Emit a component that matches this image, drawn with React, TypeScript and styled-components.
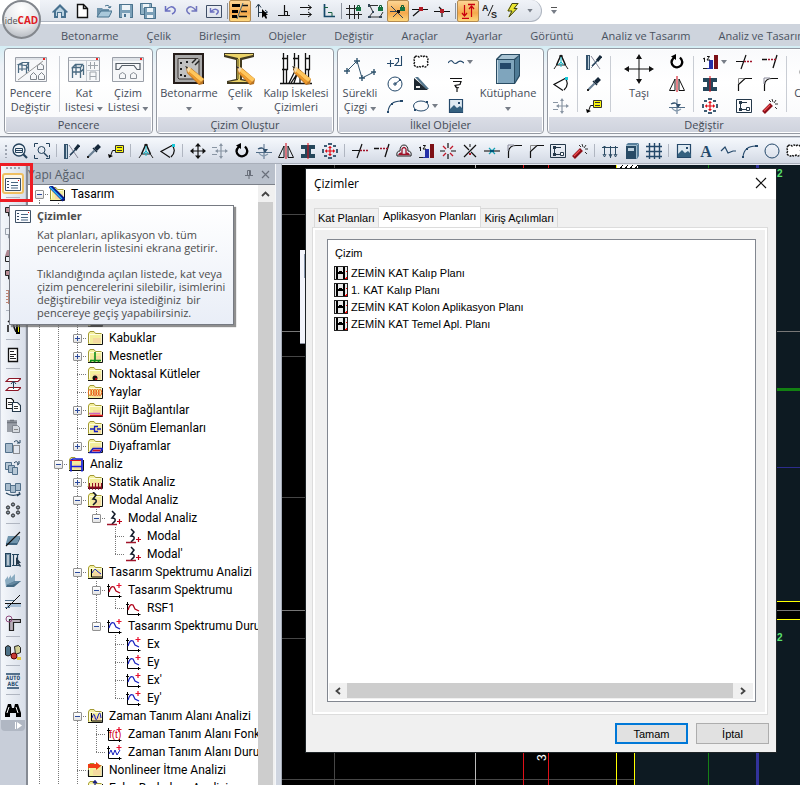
import React, { useState } from 'react';
import styled, { createGlobalStyle, css } from 'styled-components';

const ui = '"Open Sans", "Noto Sans", sans-serif';
const treeFont = 'Roboto, "Open Sans", sans-serif';
const classic = '"Liberation Sans", Arial, sans-serif';

const Global = createGlobalStyle`
  * { box-sizing: border-box; }
  html, body, #root { height: 100%; }
  body { margin: 0; overflow: hidden; font-family: ${ui}; font-size: 11px; color: #444b57; background: #cfd5df; }
  button { font: inherit; color: inherit; border: 0; background: none; padding: 0; margin: 0; white-space: nowrap; }
  svg { display: block; flex: none; }
`;

/* ---------- icons ---------- */

const s = (d: string, c = '#000', w = 1, f = 'none') => <path d={d} stroke={c} strokeWidth={w} fill={f} />;
const f = (d: string, c = '#000') => <path d={d} fill={c} />;

const navy = '#24425c';

const lock = (
  <>
    {s('M11.5 4V2.5h2V4', '#0d5a31')}
    {f('M10 4h5v4h-5z', '#14713f')}
  </>
);
const folder = (
  <>
    {f('M1 3.500L2.500 1.500h4l1.500 2h6.500v10.500h-13.500z', '#f3ef9c')}
    {s('M1.500 13.500V3.500L3 1.500h4L8.500 3.500h6', '#a39a35')}
    {f('M6 8h8v5H6z', '#f5d9a0')}
    {s('M1 14.500h14.500V4', '#111', 1)}
    {s('M2.500 12.500V4.500h11', '#fffde0')}
  </>
);
const axes = s('M2.500 2v12.500h13M1 4.500h3M13.500 13v3', '#000');
const plus = s('M10.500 3.500h5M13 1v5', '#e8102e', 1.2);
const curl = s('M5 1l3 3-3 4q4 0 3 3l-3 3', '#111827', 1.5);
const pencil = (
  <>
    {f('M13 14l5 1 13 11-1 5-4 1-12-12z', '#b77322')}
    {f('M17 15l14 11-3 3L15 18z', '#ffc65c')}
    {f('M15 18l13 11-2 2L15 20z', '#ee9a2c')}
    {f('M13 13l5 2-3 5z', '#f6dcae')}
    {f('M12 13l3 1-1 2z', '#222')}
  </>
);

const icons: Record<string, React.ReactNode> = {
  home: <>{f('M0 9L8 1l8 8-1.500 1L14 9v6H9v-5H6v5H2V9l-1 1z', '#47708f')}{f('M4 8l4-4 4 4v5h-2V9H5v4H4z', '#bcd3e2')}</>,
  new: s('M3.500 1.500h6l4 4v9h-10zM9.500 1.500v4h4', '#111', 1.4, '#fff'),
  open: <>{f('M1 14V5h5l1 1h6v3H4z', '#6f93ab')}{f('M1 14l4-6h11l-3 6z', '#a9c8da')}{s('M1 14l4-6h11l-3 6z', '#44708c')}{s('M9 3q4-2 5 2M12 4l2 1 1-2', '#44708c')}</>,
  save: <>{f('M1 1h14v14H1z', '#7ba0b8')}{s('M1.500 1.500h13v13h-13z', '#4a728d')}{f('M4 2h8v5H4z', '#edf3f7')}{f('M4 10h8v5H4z', '#dce7ef')}{f('M6 11h2v3H6z', '#47708f')}</>,
  saveall: <>{f('M0 0h11v11H0z', '#8fb0c4')}{s('M.5.5h11v11h-11z', '#4a728d')}{f('M3 1h6v4H3z', '#edf3f7')}{f('M4 4h12v12H4z', '#7ba0b8')}{s('M4.500 4.500h11v11h-11z', '#4a728d')}{f('M7 5h6v4H7zM7 12h6v3H7z', '#edf3f7')}</>,
  undo: s('M3.500 3v5h5M4 7.500Q9 1 13 6q1 3-3 5', '#6a6fc0', 1.5),
  redo: s('M12.500 3v5h-5M12 7.500Q7 1 3 6q-1 3 3 5', '#7075bd', 1.5),
  undobox: <>{s('M.5 2.500h15v12H.5z', '#3f4e66')}{s('M4.500 5v4h4M5 8.500q4-4 7-1 1 2-2 4', '#6a6fc0', 1.4)}</>,
  layers: <>{f('M0 1h8v3H0zM0 7h6v3H0zM0 12h5v3H0z')}{s('M10 2.500h6M9 8.500h6M7 13.500h8', '#111', 1.4)}{s('M11 0L5 16', '#467', 1)}</>,
  cursor: <>{s('M4.500 14V2M2 4.500L4.500 1 7 4.500M4 9.500h9M11 7l3 2.500', '#24384a')}{f('M8 6v9l2-2 2 3 1-1-1-3h2z')}</>,
  perp: <>{s('M8.500 2v10M2 12.500h12', '#111', 1.2)}{s('M8.500 8.500h3v4', '#111')}</>,
  parallel: s('M2 4.500h11M10 2l3.500 2.500L10 7M2 11.500h11M10 9l3.500 2.500L10 14', '#111'),
  ortho: <>{s('M4.500 1v12.500H15', '#16496a', 1.7)}{s('M4 4.500h4M8 9.500h4v4', '#186043')}</>,
  gridlock: <>{s('M3.500 2v14M8.500 2v14M12.500 9v7M0 5.500h10M0 11.500h16', '#222', 1)}{lock}</>,
  polylock: <>{s('M1 2.500h9M2 3l3 6-4 5h11l3-5', '#333', 1)}{f('M0 1h2v3H0zM4 8h2v2H4zM0 13h3v2H0zM11 13h3v2h-3z', '#345')}{lock}</>,
  xlock: <>{s('M1 3l6 6 6 6M13 4L3 14M0 8.500h9', '#345')}{f('M7 7h3v3H7z', '#111')}{lock}</>,
  midline: <>{s('M0 6.500h16M8 7l-7 6', '#111', 1.2)}{f('M7 4h4v4H7z', '#b41b25')}</>,
  midtop: <>{s('M0 8.500h16M8 9v5M5 4l3 3', '#111', 1.2)}{f('M6 6h4v4H6z', '#b41b25')}</>,
  updown: <>{s('M4.500 2v11M2 10l2.500 3L7 10M11.500 3v11M9 6l2.500-3L14 6', '#c90010', 1.2)}{s('M2 15.500h7M8 1.500h7', '#c90010', 1.3)}</>,
  bolt: <>{f('M8 0h7l-4 5h3L4 15l3-7H3z', '#e9e52f')}{s('M8 .5h6l-4 5h3L5 14l3-6H4z', '#3f421a')}</>,
  slashAS: <>{s('M11 2L6 13', '#222')}<text x="0" y="8" fontSize="9" fontWeight="bold" fontFamily="Liberation Sans, sans-serif" fill="#222">A</text><text x="9" y="15" fontSize="9" fontWeight="bold" fontFamily="Liberation Sans, sans-serif" fill="#222">S</text></>,

  zoomrect: <>{s('M11 11l4 4', navy, 2.200)}<circle cx="7" cy="7" r="6" stroke={navy} strokeWidth="1.3" fill="#eef3f8" />{s('M3.500 5.500h7v4h-7zM3.500 7.500h7', navy)}</>,
  zoomsel: <>{s('M.5 4V.5H4M12 .5h3.500V4M15.500 12v3.500H12M4 15.500H.5V12', navy, 1)}<circle cx="7.500" cy="7" r="3.500" stroke={navy} fill="none" />{s('M10 10l4 4', navy, 1.500)}</>,
  rulerpen: <>{f('M0 1h4v15H0z', '#34536d')}{s('M2.500 2v13', '#b8ccda', 1)}{s('M5 2l9 13M5 14l5-5', '#889')}{s('M15 2l-4 5', '#15283a', 3)}{s('M11 7l-5 5', navy, 1.500)}</>,
  dropper: <>{s('M13.500 2.500l-4 4', '#15283a', 4)}{s('M7 5l4 4', '#15283a', 1.500)}{s('M8.500 7.500l-6 6', '#6b8195', 2.200)}{f('M1 13h2v2H1z', '#222')}</>,
  label: <>{s('M7.500 2.500h8v7h-8z', '#333', 1, '#f8f40c')}{s('M9 4.500h5M9 7.500h5', '#333')}{s('M7 7.500H4.500L2.500 13', '#111')}{f('M0 11l5 2-4 2z')}</>,
  compassA: <>{s('M8 1L3.500 11M8 1l4.500 10', '#111', 1.500)}{s('M1 15l4-6M15 15l-4-6M6 2h4M4 11h8', '#222')}{s('M8 3v10M5 11l3-3 3 3', '#19b9c9')}</>,
  angle: <>{s('M13 2L1 8.500l9 6M12 2q5 6-1 12', '#111', 1.2)}{f('M12 1h3v3h-3z', '#18c7d8')}</>,
  move: <>{s('M8 1.500v13M1.500 8h13', '#111', 1.200)}{f('M8 0l3 3.500H5zM8 16l3-3.500H5zM0 8l3.500-3v6zM16 8l-3.500-3v6z', '#111')}</>,
  movegray: <>{s('M9 2v12M4 8h11M0 4.500h5M0 11.500h5', '#8995a3', 1.2)}{f('M9 0l2 3H7zM9 16l2-3H7zM16 8l-3-2v4zM3 8l3-2v4z', '#8995a3')}</>,
  rotate: <>{s('M5 3.500q-5 5 0 9 4 2 7-1 3-4-1-8', '#000', 2.300)}{f('M7 0v6L2 2.500z')}</>,
  turn: <>{s('M8 1v15M0 9.500h16', '#526d88')}{s('M2 6q6-3 7 3', '#31506d', 1.300)}{s('M3 10q3 5 9 1', '#8499ac', 1.300)}{f('M7 6l5 0-3 4z', '#31506d')}</>,
  mirror: <>{s('M6 3v11.500H.5zM10 3v11.500h5.500z', '#111')}{s('M8 0v16', '#d00010', 1)}</>,
  ibeam: <>{f('M1 2h14v4H1zM1 11h14v4H1zM5 6h6v5H5z', '#24465a')}{s('M8 0v16', '#e00a14')}</>,
  array: <>{s('M8 3.500v9M3.500 8h9', '#e00a14', 1.200)}{f('M6 5h4L8 3zM6 11h4l-2 2zM5 6v4L3 8zM11 6v4l2-2z', '#e00a14')}{f('M6 0h4v2H6zM6 14h4v2H6zM0 6h2v4H0zM14 6h2v4h-2zM2 2h3v2H2zM11 2h3v2h-3zM2 12h3v2H2zM11 12h3v2h-3z', '#3e5c74')}</>,
  extend: <>{s('M10 1L5 15M0 7.500h8', '#111', 1.200)}{s('M8 7.500h2M11 7.500h2M14 7.500h2', '#a0142a', 1.600)}</>,
  trim: <>{s('M15 1l-4 13M0 5.500h5', '#111', 1.300)}{s('M6 5.500h2M9 5.500h2M12 5.500h2', '#a0142a', 1.500)}</>,
  bridge: <>{s('M1 13q-1-5 3-5 0-6 4-6t4 6q4 0 3 5z', '#222')}{s('M3 11.500q1-2 3-1V6q2-3 4 0v4.500q2-1 3 1z', '#a0142a', 1.300)}</>,
  stairs: <>{f('M1 14h5v1H1z', '#222')}{f('M7 6h4v9H5v-1h2z', '#2430a8')}{f('M12 1h4v14h-4z', '#7d1016')}{s('M1 5l1.500-1v4M5 2.500h2.500L5 6h3', '#111')}</>,
  explode: <>{s('M8 0v5M8 11v5M0 8h5M11 8h5', '#111', 1.200)}{s('M3 3l3 3M13 3l-3 3M3 13l3-3M13 13l-3-3', '#c0182a', 1.300)}</>,
  xbreak: <>{s('M2 2l5 5M14 2L2 14M9 9l5 5', '#111', 1.200)}{s('M8 1v3', '#111')}{s('M8 10v2', '#b0182a', 2)}</>,
  cyanbreak: <>{s('M0 8h16', '#111', 1.100)}{s('M5 5l6 6M11 5l-6 6', '#159fb3', 1.200)}{f('M6 7h4v2H6z', '#057')}</>,
  fillet: <>{s('M2.500 15V9Q3 2.500 10 2.500h6', '#111', 1.200)}{s('M2 8V2h6', '#889')}</>,
  chamfer: <>{s('M2.500 15V8.500L9 2.500h7', '#111', 1.200)}{s('M2.500 8V2.500H8', '#888')}</>,
  nodes: <>{s('M.5 1.500h15v13H.5z', '#24384a')}{s('M4.500 5v6.500h7M4 4.500h7', '#24384a')}{f('M3 3h3v3H3zM3 10h3v3H3z', '#24384a')}{s('M10.500 9.500h3v3h-3z', '#24384a', 1, '#fff')}</>,
  wand: <>{s('M1.500 14.500l8-8', '#8b0e18', 4)}{s('M2 13l6-6', '#ef4d50', 1.300)}{s('M10 1l1 3M14 2l-2 3M16 6l-3 0M13 9l2 2M7 2l2 2', '#333')}</>,
  dims: s('M2.500 3v9M8.500 3v12M13.500 3v9M0 4.500h16M1 4l3 0M1 11l1.500 3L4 11M7 11l1.500 3 1.500-3M12 11l1.500 3 1.500-3', '#2b4a63', 1),
  book: <>{f('M2 2l2-2h11v13l-2 3H2z', '#587f9b')}{f('M2 3h10v13H2z', '#284b66')}{f('M4 5h6v3H4z', '#bfd2df')}{s('M2 2.500h10.500v13M13 2l2-2', '#9fbccd')}</>,
  grid: s('M3.500 0v16M8.500 0v16M13.500 0v16M0 3.500h16M0 8.500h16M0 13.500h16', '#24486a', 1.400),
  picture: <>{s('M1.500 1.500h13v13h-13z', '#24486a', 1.200, '#dfeaf2')}{f('M2 11l4-4 3 3 3-2 3 3v3H2z', '#34607f')}{f('M10 4h2v2h-2z', '#24486a')}</>,
  letterA: <text x="8" y="14" textAnchor="middle" fontSize="16" fontWeight="bold" fontFamily="Liberation Serif, serif" fill="#24486a">A</text>,
  wave: s('M0 9q3-4 5-1t5 0q3-2 6 1', '#24486a', 1.200),
  zig: s('M1 8l4-4 3 6 5-2 3 0', '#24486a', 1.200),
  arc: <>{s('M1 14Q2 3 14 3', '#24486a', 1.100)}{f('M0 13h2v2H0zM13 2h3v2h-3zM4 5h2v2H4z', '#24486a')}</>,
  circle: <circle cx="8" cy="8" r="7" stroke="#24486a" fill="none" />,
  circle3: <><circle cx="8" cy="8" r="7" stroke="#24486a" fill="none" />{s('M6 8h4M8 6v4M8 8l5-4', '#24486a')}{f('M12 3h2v2h-2z', '#24486a')}</>,
  cloud: <path d="M2 3q2-2 4 0 2-2 4 0 2-2 4 0 2 2 0 4 2 2 0 5-2 2-4 0-2 2-4 0-2 2-4 0-2-2 0-4-2-3 0-5z" stroke="#111" strokeDasharray="2 1" strokeWidth="1.400" fill="#fff" />,
  plus2: <>{s('M0 9.500h7M3.500 6v7', '#24486a', 1.100)}{s('M8 4.500h3.500v3L8 11.500h6.500V2', '#24486a', 1.100)}</>,
  triangle: <>{f('M1 2l14 12H1z', '#1d2730')}{f('M2 1h3l11 12h-3z', '#53758c')}{f('M3 10h4v2H3z', '#eee')}</>,
  spring: s('M2 2.500h12M5 5.500h8l-1 3-5 1q1 3 4 2M9 12v4', '#111', 1.200),
  ellipse: <><ellipse cx="8" cy="8" rx="7.500" ry="5" stroke="#24486a" fill="none" />{f('M1 11h2v2H1zM13 3h2v2h-2z', '#24486a')}</>,

  listdoc: <>{s('M.5 2.500h15v12H.5z', '#3f5166', 1, '#fbfcff')}{s('M2 5.500h2M2 8.500h2M2 11.500h2', '#33485f')}{s('M6 6.500h7M6 9.500h7M6 12h7', '#4a6582')}{f('M13 4h1v1h-1z', '#e00')}</>,
  doc: <>{s('M3.500 1.500h9v13h-9z', '#111', 1.300, '#fff')}{s('M5 4.500h4M5 7.500h6M5 9.500h4M5 11.500h6', '#222')}</>,
  pinkstep: <>{f('M0 3h6v4H0z', '#b78c95')}{s('M.5 2.500h7v5h-7zM3.500 8v3h5v3', '#222')}</>,
  graystep: s('M.5 2.500h6v6h-6zM3.500 9v3h5v3', '#9aa2ad'),
  lampshade: <>{f('M2 3h7l2 6H0z', '#ad8791')}{s('M.5 9.500h9v5h-9z', '#222')}</>,
  wall: s('M1 1.500h12M1 4.500h12M1 7.500h12M1 10.500h12M1 13.500h12M3.500 1v14', '#bc8778'),
  road: <>{s('M3 4q4-4 5 1t3 9M3 7v7', '#111', 1.500)}{f('M11 1h4v15h-4z')}{s('M13.500 2v12', '#ee0', 1)}</>,
  offsetUp: <>{s('M4 2.500h12l-3 3H1z', '#8b1626', 1.100, '#fff')}{s('M4 11.500h12l-3 3H1z', '#8b1626', 1.100, '#fff')}{s('M8.500 13V6M6 8l2.500-3L11 8', navy)}</>,
  copy: <>{s('M1.500 1.500h5l2 2v8h-7z', '#111', 1.100, '#fff')}{s('M3 5.500h4M3 7.500h4', '#333')}{s('M7.500 5.500h5l3 3v6h-8z', '#24384a', 1.100, '#fff')}{s('M9 9.500h4M9 11.500h4', '#333')}</>,
  paste: <>{f('M2 2h10v12H2z', '#9a9fa7')}{s('M5 2.500h4M2 4.500h10', '#70767f', 1.500)}{s('M7.500 7.500h5l2 2v5h-7z', '#80868f', 1, '#d7dbe0')}{s('M9 11.500h4', '#888')}</>,
  boxmove: <>{s('M.5 4.500h7v9h-7z', '#52708a', 1, '#a8bccd')}<path d="M8.500 6.500h6v8h-6z" stroke="#333" fill="none" strokeDasharray="1 1" />{s('M9 3q3-3 5 1M12 4h3V1', navy)}</>,
  boxcopy: <>{s('M.5 2.500h6v7h-6z', '#52708a', 1, '#b7c8d6')}{s('M3.500 5.500h6v7h-6z', '#52708a', 1, '#a8bccd')}{s('M7.500 7.500h5v7h-5z', '#52708a', 1, '#b7c8d6')}{s('M9 3q3-3 4 1M12 5l2-1V1', navy)}</>,
  boxrow: <>{s('M.5 2.500h5v7h-5zM5.500 4.500h5v7h-5zM10.500 2.500h5v7h-5z', '#52708a', 1, '#a8bccd')}{s('M1 12q6 4 13 1M12 15l3-2-1-2', navy, 1.200)}</>,
  ring: <>{[[8, 2.500], [13, 5.500], [13, 10.500], [8, 13.500], [3, 10.500], [3, 5.500]].map(([x, y]) => <circle key={`${x}-${y}`} cx={x} cy={y} r="1.600" fill="#8b99a7" stroke="#222" />)}</>,
  plane: <>{f('M3 5h12l-3 7H1z', '#6f94ac')}{f('M1 12h11l3-7v3l-3 6H1z', '#3f647f')}{s('M15 1L1 15', '#111', 1.100)}</>,
  beamcur: <>{s('M.5 1.500h5v13h-5z', '#24445c', 1.200, '#6d8ba1')}{s('M7 2.500h7M7 13.500h7M8.500 3v10M12.500 3v4', '#24445c', 1.200)}{s('M2 4h2M2 6h2M2 8h2M2 10h2M2 12h2', '#fff')}{f('M11 5v9l2-2 2 3 1-1-2-3h2z', '#24384a')}</>,
  slab: <>{f('M0 7l3-4v3l3-4v3l4-4v9l-9 4z', '#8aabc0')}{f('M10 8h6l-7 6H1l1-2z', '#446982')}{f('M1 12l9-4h6l-9 4z', '#6488a0')}</>,
  section: <>{f('M2 9h14v4H2z', '#a9c1d8')}{s('M0 9.500h16M1 15L15 1', '#111')}{s('M0 6.500h9M0 13.500h5', '#52708a')}</>,
  corner: <>{s('M4.500 4.500h11v3h-7v8h-4z', '#222', 1.200, '#b8adb8')}<circle cx="4" cy="4" r="3" stroke="#914b7f" fill="none" /></>,
  cylinders: <>{s('M.5 3q2.500-3 5 0v8q-2.500 2-5 0z', '#222', 1, '#4d7187')}{s('M9.500 2.500l4-1 2 2v5l-5 2z', '#222', 1, '#d1cf95')}<circle cx="9" cy="12" r="3" fill="#c83a34" stroke="#500" />{f('M12 13h4v3h-4z', '#e3c73d')}</>,
  autoabc: <><text x="8" y="7" textAnchor="middle" fontSize="6" fontWeight="bold" fontFamily="DejaVu Sans Mono, monospace" fill="#24486a">AUTO</text><text x="8" y="13" textAnchor="middle" fontSize="6" fontWeight="bold" fontFamily="DejaVu Sans Mono, monospace" fill="#24486a">ABC</text>{s('M1 1h14M2 15h12', '#24486a', 1.500)}</>,
  binoculars: <>{f('M3 2h3l1 4h2l1-4h3l3 9v4h-5v-4H5v4H0v-4z')}{s('M4 5l-2 6M11 5l2 6', '#fff')}</>,

  folder,
  pen: <>{folder}{s('M1 0l14 14', '#0a1c8c', 4)}{s('M1 1l12 12', '#28b6ff', 1.500)}</>,
  dark: <>{folder}{f('M4 12h11v3H3z')}</>,
  mesnet: <>{folder}{s('M8 4v8M3 12.500h11M3 14l2-2M7 14l2-2M11 14l2-2', '#0a8a18', 1.600)}</>,
  nokta: <>{folder}<circle cx="8" cy="12" r="2.500" fill="#111" />{f('M8 12h2v2H8z', '#b00010')}</>,
  yay: <>{folder}{[3, 5.500, 8, 10.500, 13].map(x => <ellipse key={x} cx={x} cy="8.500" rx="1.700" ry="3" stroke="#e8641c" fill="none" />)}</>,
  rijit: <>{folder}{s('M2 11.500h11', '#cc66c0', 1.500)}{s('M3 13.500h13', '#e01020', 1.500)}</>,
  sonum: <>{folder}{s('M3 9h4M10 9h4M7 6.500h4M7 11.500h4M7.500 6.500v5', '#1620c0', 1.300)}</>,
  diyafram: <>{folder}{s('M3 14.500l3-4h10l-3 4z', '#1620c0', 1.500, '#f58a92')}{s('M6 12.500h7', '#d01020')}</>,
  analiz: <>{folder}{s('M3 15.500V4l2-1h9v12.500M3 10.500h11', '#1620e0', 1.700)}{s('M2 4.500h11', '#e01020')}</>,
  statik: <>{folder}{s('M2.500 9v6M5.500 9v6M8.500 9v6M11.500 9v6M14.500 9v6M1 12.500l1.500 3L4 12.500l1.500 3L7 12.500l1.500 3 1.500-3 1.500 3 1.500-3 1.500 3', '#8b0e20')}</>,
  modalfolder: <>{folder}<g transform="translate(1 -1)">{curl}</g>{s('M3 15h10', '#a0142a', 1.500)}</>,
  modal: <><g transform="translate(1 0)">{curl}</g>{s('M1 14.500h10', '#a0142a', 1.500)}{s('M11 11.500h5M13.500 9v5', '#c00018', 1.200)}</>,
  spfolder: <>{folder}{s('M4.500 5v8H15', '#000')}{s('M5 9q3-6 5-2l4 3', '#1620c0')}</>,
  spred: <>{axes}{s('M3 10q2-7 5-5l2 4 4 2', '#b00018', 1.300)}{plus}</>,
  sprednp: <>{axes}{s('M3 10q2-7 5-5l2 4 4 2', '#b00018', 1.300)}</>,
  spblue: <>{axes}{s('M3 10q2-7 5-5l2 4 4 2', '#1620c0', 1.200)}{plus}</>,
  timefolder: <>{folder}{s('M4.500 5v8H15', '#000')}{s('M5 10q2-7 3-1t3-1 3 2', '#1620c0')}</>,
  ft: <>{axes}<text x="3" y="12" fontSize="10" fontFamily="Liberation Sans, sans-serif" fill="#d00018">f(t)</text>{plus}</>,
  time: <>{axes}{s('M3 10l2-4 2 5 2-5 2 5 3-5', '#1620c0')}{plus}</>,
  nonlin: <>{folder}{f('M1 2h8V0l5 4-5 4V6H1z', '#f03a12')}{s('M1 14.500h14.500V5M1.500 8v6', '#111', 1.200)}</>,
  euler: <>{folder}{s('M8 0v6M6 3l2-2 2 2', '#1a2080', 1.300)}</>,
};

const Icon = ({ name, size = 16 }: { name: string; size?: number }) => (
  <svg width={size} height={size} viewBox="0 0 16 16" aria-hidden="true">{icons[name]}</svg>
);

const big: Record<string, React.ReactNode> = {
  pencere: <>{s('M.5 4.500h31v24H.5z', '#9a9fa8', 1, '#f6f7f9')}{f('M1 5h30v2H1z', '#dfe3e8')}{f('M28 5h2v2h-2z', '#e22')}{s('M3.500 11.500l4-2h6l-2 3zM3.500 12v8M11.500 13v8M13.500 10v8M3.500 16h8l2-3M7 10v8', '#4b6b82', 1.200)}{s('M15.500 26.500v-4l3-3 3 3v4zM22.500 16.500v-4l3-2 3 2v4zM23.500 26.500v-4l3-3 3 3v4z', '#7d838a')}{s('M3 27L28 8', '#999')}</>,
  kat: <>{s('M.5 4.500h31v24H.5z', '#9a9fa8', 1, '#f6f7f9')}{s('M1 7.500h30M18.500 8v20M18 17.500h13', '#c5cad1')}{f('M28 5h2v2h-2z', '#e22')}{s('M4.500 14.500l3-3h7l-2 3zM4.500 15v10M12.500 15v10M15.500 12v10M4.500 19h8l3-3M8 12v10', '#4b6b82', 1.300)}{s('M20 12.500h10M22.500 9v7M26.500 9v7M22 27v-8h6v8M22 23.500h6', '#9da3aa')}</>,
  cizim: <>{s('M.5 4.500h31v24H.5z', '#9a9fa8', 1, '#f6f7f9')}{f('M1 5h30v3H1z', '#dfe3e8')}{f('M28 5h2v2h-2z', '#e22')}{s('M4 10.500h24v6h-3l-3-4h-12l-3 4H4z', '#555d66', 1.200)}{s('M7.500 25.500v-4l3-2 3 2v4zM18.500 25.500v-4l3-2 3 2v4z', '#888e96')}</>,
  concrete: <>{s('M1 1h29v29H1z', '#251d1a', 2, '#a9a9a9')}{s('M5 5.500h20l1 1V25l-1 1H6l-1-1z', '#3b3532', 1, '#c2c2c2')}{s('M7 10h2M7 16h2M7 22h2M12 24v-2M22 24v-2M14 8v2', '#222', 2)}{s('M19 10l4-4M22 12l4-4', '#222', 1.500)}{pencil}</>,
  steelbeam: <>{f('M0 0h30v4L18 7v19l9 2v3H3v-3l9-2V7L0 4z', '#423b22')}{f('M1 1h28v1L16 5v22l10 2H4l10-2V5L1 2z', '#ebd368')}{f('M13 6h2v20h-2z', '#9b8d3f')}{pencil}</>,
  scaffold: <>{s('M3.500 0v17M7.500 2v15M14.500 0v17M18.500 2v17M25.500 0v17M29.500 2v15M2 5.500h6M13 5.500h6M25 5.500h5M2 16.500h6M13 16.500h6M25 16.500h5M3.500 17v13M6.500 17v13M25.500 17v13M28.500 17v13M0 30.500h32M9 30l6-12M14 30l4-12M20 30V17M11 30l6-9', '#111', 1.300)}{pencil}</>,
  polyline: <>{s('M3 18L13 8l5 17 12-6', '#31546e', 1)}{s('M0 18h6M3 15v6M10 8h6M13 5v6M15 25h6M18 22v6M27 19h6M30 16v6', '#31546e', 1.400)}</>,
  library: <>{f('M4 6l5-5h19v22l-5 8H4z', '#294c63')}{f('M5 7h17v23H5z', '#7fa5bd')}{f('M6 6l4-4h17l-5 4z', '#a9c4d4')}{f('M23 7l4-4v19l-4 7z', '#4f7b96')}{f('M8 10h11v6H8z', '#24486a')}{s('M5.500 7v23', '#c0d6e2')}</>,
  bigmove: <>{s('M16 4v24M4 16h24', '#111', 1)}{f('M16 1l3 5h-6zM16 31l3-5h-6zM1 16l5-3v6zM31 16l-5-3v6z', '#111')}</>,
  target: <><circle cx="17" cy="19" r="9" fill="#fff" stroke="#555" />{f('M14 15l3-1v9h-3z', '#a11')}</>,
};
const Big = ({ name }: { name: string }) => <svg width="32" height="32" viewBox="0 0 32 32" aria-hidden="true">{big[name]}</svg>;

/* ---------- top bars ---------- */

const Page = styled.div`display: flex; flex-direction: column; height: 100vh; min-width: 0; overflow: hidden; position: relative;`;
const TitleBar = styled.header`height: 24px; flex: none; background: #fff; display: flex; align-items: flex-start; padding-left: 40px;`;
const Quick = styled.div`
  display: flex; align-items: center; height: 22px; padding: 0 4px 0 9px; background: linear-gradient(#f0f3f8, #dce1e9);
  border: solid #aeb5c0; border-width: 0 1px 1px 0; border-radius: 0 11px 11px 0;
`;
const Tool = styled.button<{ $on?: boolean; $h?: number }>`
  width: 22px; height: ${p => p.$h ?? 22}px; display: flex; align-items: center; justify-content: center; flex: none;
  ${p => p.$on && css`background: linear-gradient(#fcd594, #f5a94c 60%, #fcd77e); border: 1px solid #b38a4f; border-radius: 2px;`}
`;
const Caret = styled.span<{ $wide?: boolean }>`
  display: inline-block; width: ${p => (p.$wide ? 14 : 6)}px; height: 4px; background: #777d87; clip-path: polygon(0 0, 100% 0, 50% 100%);
  ${p => p.$wide && css`clip-path: polygon(4px 0, 10px 0, 7px 4px);`}
`;
const Customize = styled.button`
  margin: 7px 0 0 8px; width: 8px; height: 8px; display: flex; flex-direction: column; align-items: center; gap: 2px;
  &::before { content: ''; width: 6px; height: 1px; background: #555; }
`;
const QuickSep = styled.span`width: 1px; height: 16px; margin: 0 1px 0 2px; background: #8d94a0; flex: none;`;

const Logo = styled.button`
  position: absolute; left: 2px; top: 0; width: 39px; height: 39px; border-radius: 50%; z-index: 2;
  border: 2px solid #83878d; background: radial-gradient(circle at 50% 20%, #fff, #e5e7ea 55%, #a5aab2);
  font: 9px ${ui}; color: #555; text-align: center;
  b { color: #e01a22; font-size: 10px; }
`;
const Tabs = styled.nav`
  height: 22px; flex: none; display: flex; gap: 28px; padding-left: 61px; align-items: center; overflow: hidden;
  background: #ced4dd; color: #4a5260;
`;

const Ribbon = styled.div`
  flex: none; display: flex; gap: 3px; padding: 2px 0 2px 4px; overflow: hidden;
  background: linear-gradient(#d4edf4, #eef2f7 20px, #f4f6f9); border-bottom: 1px solid #8e939d;
`;
const Group = styled.section<{ $w: number }>`
  width: ${p => p.$w}px; flex: none; border: 1px solid #959aa3; border-radius: 4px; overflow: hidden; box-shadow: inset 0 0 0 1px #fff;
  background: linear-gradient(#f9fafc, #fff 40%, #f7f8fa); display: flex; flex-direction: column;
`;
const GroupBody = styled.div`height: 68px; display: flex; align-items: flex-start; padding-top: 2px;`;
const GroupTitle = styled.h2`
  margin: 0 1px 1px; height: 15px; line-height: 15px; font-size: 11px; font-weight: 400; text-align: center; background: linear-gradient(#dadde6, #cfd3dd);
`;
const BigButton = styled.button<{ $w: number }>`
  width: ${p => p.$w}px; flex: none; display: flex; flex-direction: column; align-items: center; line-height: 14px; gap: 1px; padding-top: 2px;
  & > span { text-align: center; min-height: 28px; }
`;
const BigLabel = ({ lines, caret }: { lines: string[]; caret?: 'inline' | 'below' }) => (
  <span>
    {lines.map((l, i) => <React.Fragment key={l}>{i > 0 && <br />}{l}</React.Fragment>)}
    {caret === 'inline' && <> <Caret /></>}
    {caret === 'below' && <><br /><Caret /></>}
  </span>
);
const SmallCol = styled.div<{ $w?: number }>`
  width: ${p => p.$w ?? 26}px; flex: none; display: flex; flex-direction: column; align-items: flex-start; padding-left: 2px;
`;
const SmallRow = styled.div`display: flex; align-items: center; height: 22px;`;
const VLine = styled.i`width: 1px; height: 56px; margin: 5px 3px 0; background: #c9cdd4; flex: none;`;

const ToolStrip = styled.div`
  flex: none; display: flex; align-items: center; height: 26px; overflow: hidden; margin-top: 1px; padding-left: 4px;
  background: linear-gradient(#f5f8fc, #e5eaf2 50%, #d3d9e4); border-bottom: 1px solid #a9afba;
`;
const Grip = styled.i<{ $flat?: boolean }>`
  flex: none; width: ${p => (p.$flat ? 16 : 5)}px; height: ${p => (p.$flat ? 3 : 14)}px;
  background: radial-gradient(circle, #9ea5b1 1px, transparent 1px) 0 0 / 4px 4px;
`;
const Sep = styled.i`flex: none; width: 1px; height: 13px; margin: 0 4px 0 3px; background: #b0b6c1;`;
const HSep = styled.i`flex: none; height: 1px; width: 14px; margin: 3px 0 4px; background: #b0b6c1;`;

/* ---------- work area ---------- */

const Work = styled.div`flex: 1; min-height: 0; display: flex; position: relative;`;
const SideDock = styled.aside`width: 28px; flex: none; background: #c8ced9; border-right: 2px solid #858a93; padding-left: 1px;`;
const SideBar = styled.div`
  width: 24px; display: flex; flex-direction: column; align-items: center; padding-top: 2px; background: linear-gradient(90deg, #f4f7fb, #d9dfe9);
  & > ${Grip} { margin-bottom: 4px; }
  & > ${Tool}:nth-of-type(1) { background: #fbf7ea; border: 2px solid #eebf62; border-radius: 3px; }
`;
const SideEnd = styled.div`
  width: 24px; height: 11px; background: #b0b7c3; border-radius: 0 0 4px 4px; display: flex; justify-content: flex-end; align-items: center; padding-right: 3px;
`;

const TreePanel = styled.section`width: 247px; flex: none; display: flex; flex-direction: column; background: #fff; overflow: hidden;`;
const TreeHead = styled.header`
  height: 21px; flex: none; background: #b9c0cb; border-bottom: 1px solid #7c818a; display: flex; align-items: center; padding-right: 2px; font-size: 12px; color: #555d69;
  h2 { font: inherit; margin: 0; flex: 1; }
`;
const HeadButton = styled.button`width: 16px; height: 16px; display: grid; place-items: center;`;
const TreeBody = styled.div`flex: 1; min-height: 0; display: flex;`;
const Tree = styled.ul`list-style: none; margin: 0; padding: 0 0 0 2px; flex: 1; min-width: 0; overflow: hidden; color: #000; font: 12px ${treeFont};`;
const TreeRow = styled.li`display: flex; align-items: center; height: 18px; white-space: nowrap;`;
const dotsV = 'repeating-linear-gradient(#777 0 1px, transparent 1px 2px)';
const dotsH = 'repeating-linear-gradient(90deg, #777 0 1px, transparent 1px 2px)';
const Guide = styled.span<{ $k: string }>`
  width: 19px; height: 18px; flex: none; display: flex; align-items: center; justify-content: center; background-repeat: no-repeat;
  ${p => p.$k === '|' && css`background-image: ${dotsV}; background-size: 1px 18px; background-position: 9px 0;`}
  ${p => p.$k === 't' && css`background-image: ${dotsV}, ${dotsH}; background-size: 1px 18px, 10px 1px; background-position: 9px 0, 9px 9px;`}
  ${p => p.$k === 'L' && css`background-image: ${dotsV}, ${dotsH}; background-size: 1px 9px, 10px 1px; background-position: 9px 0, 9px 9px;`}
  ${p => p.$k === 'r' && css`background-image: ${dotsV}, ${dotsH}; background-size: 1px 9px, 10px 1px; background-position: 9px 9px, 9px 9px;`}
`;
const Toggle = styled.button<{ $plus: boolean }>`
  width: 9px; height: 9px; border: 1px solid #919191; border-radius: 1px;
  background: linear-gradient(#2b4a9c, #2b4a9c) center / 5px 1px no-repeat,
    ${p => p.$plus && 'linear-gradient(#2b4a9c, #2b4a9c) center / 1px 5px no-repeat,'}
    linear-gradient(#fff, #e4e4e4);
`;
const TreeLabel = styled.span`margin-left: 6px;`;
const VScroll = styled.div`width: 15px; flex: none; background: #cdcdcd; button { width: 15px; height: 17px; background: #f0f0f0; display: grid; place-items: center; }`;
const PanelEdge = styled.div`width: 2px; flex: none; background: #f0f0f0;`;
const Splitter = styled.div`width: 7px; flex: none; background: #cfd5e0; border-left: 1px solid #f4f6f9; border-right: 1px solid #a5abb6;`;

const Canvas = styled.main`
  flex: 1; min-width: 0; position: relative; background: #000; overflow: hidden; border-top: 1px solid #e8ecf3;
  & > svg { position: absolute; left: 0; top: 0; }
`;

/* ---------- dialog ---------- */

const Dialog = styled.div`
  position: absolute; left: 24px; right: 24px; top: 4px; bottom: 33px; background: #f0f0f0; color: #000; display: flex; flex-direction: column;
  outline: 1px solid #1e2427; font: 11px ${classic};
`;
const DialogTitle = styled.header`
  height: 30px; flex: none; background: #fff; display: flex; align-items: center; justify-content: space-between; padding: 0 9px 2px 8px;
  h1 { margin: 0; font: 12px ${ui}; }
`;
const DialogTabs = styled.div`display: flex; align-items: flex-end; padding: 7px 8px 0; height: 28px; flex: none;`;
const DialogTab = styled.button<{ $on: boolean }>`
  height: ${p => (p.$on ? 21 : 19)}px; padding: 0 3px; border: 1px solid #d9d9d9; border-bottom: 0; background: ${p => (p.$on ? '#fff' : '#f0f0f0')};
  ${p => p.$on && css`padding: 0 4px 2px; border-color: #dcdcdc;`}
  & + & { border-left: 0; }
`;
const TabPanel = styled.div`
  flex: 1; min-height: 0; margin: 0 8px 0 6px; border: 1px solid #dcdcdc; background: #f0f0f0; box-shadow: inset 0 0 0 2px #fff; padding: 11px 11px 12px 14px; display: flex;
`;
const ListBox = styled.div`flex: 1; display: flex; flex-direction: column; background: #fff; border: 1px solid #828790; padding: 3px 2px 2px 1px;`;
const ListArea = styled.div`flex: 1; min-height: 0; padding-left: 5px;`;
const DrawingTable = styled.table`
  border-collapse: collapse;
  th { font-weight: 400; text-align: left; height: 21px; padding: 0 1px 1px; }
  td { height: 17px; padding: 0; }
  td > button { display: flex; align-items: center; gap: 3px; height: 17px; }
`;
const HScroll = styled.div`
  height: 16px; flex: none; display: flex; background: #f0f0f0;
  button { width: 18px; display: grid; place-items: center; } button:last-child { width: 20px; }
`;
const HThumb = styled.div`flex: 1; background: #cdcdcd; margin-bottom: 1px;`;
const DialogFoot = styled.footer`height: 37px; flex: none; display: flex; justify-content: flex-end; gap: 8px; padding: 8px 7px 0 0;`;
const PushButton = styled.button<{ $main?: boolean }>`
  width: 73px; height: 21px; background: #e1e1e1; border: ${p => (p.$main ? '2px solid #0078d7' : '1px solid #adadad')};
`;

/* ---------- tooltip and marker ---------- */

const Marker = styled.div`position: absolute; left: -2px; top: -1px; width: 35px; height: 39px; border: 3px solid #ee1c24; z-index: 3;`;
const Tooltip = styled.div`
  position: absolute; left: 9px; top: 41px; width: 225px; z-index: 4; border: 1px solid #767a82; background: linear-gradient(#fff, #e9eef7);
  box-shadow: 2px 2px 1px #666b; padding: 2px 0 5px 5px; color: #4c4c4c; line-height: 13px; display: grid; grid-template-columns: 16px 1fr; column-gap: 6px;
  strong { line-height: 15px; }
  p { grid-column: 2; margin: 4px 0 9px; white-space: pre; }
  p:last-child { margin-bottom: 0; }
`;

const quick: (string | null)[] = ['home', 'new', 'open', 'save', 'saveall', 'undo', 'redo', 'undobox', null, 'layers*', 'cursor', 'perp', 'parallel', 'ortho', null,
  'gridlock', 'polylock', 'xlock*', 'midline', 'midtop', null, 'updown*', 'slashAS', 'bolt'];
const strip: (string | null)[] = ['zoomrect', 'zoomsel', null, 'rulerpen', 'dropper', 'label', null, 'compassA', 'angle', null, 'move', 'movegray', 'rotate', 'turn', 'mirror', 'ibeam', 'array', null,
  'extend', 'trim', 'bridge', 'stairs', 'explode', 'xbreak', 'cyanbreak', 'fillet', 'chamfer', 'nodes', 'wand', null, 'dims', 'book', 'grid', null,
  'picture', 'letterA', 'zig', 'arc', 'circle', 'cloud'];
const side: (string | null)[] = ['listdoc*', null, 'pinkstep', 'graystep', 'lampshade', 'pinkstep', 'wall', null, 'road', null, 'doc', null,
  'offsetUp', 'copy', 'paste', 'boxmove', 'boxcopy', 'boxrow', 'ring', null, 'plane', 'beamcur', 'slab', 'section', 'corner', null, 'cylinders', null, 'autoabc', null, 'binoculars'];
const menus = ['Betonarme', 'Çelik', 'Birleşim', 'Objeler', 'Değiştir', 'Araçlar', 'Ayarlar', 'Görüntü', 'Analiz ve Tasarım', 'Analiz ve Tasarım'];

/* guides, toggle, icon, label */
const rows: [string, string, string, string][] = [
  ['r', '-', 'pen', 'Tasarım'],
  ['|t', '', 'folder', ''], ['|t', '', 'folder', ''], ['|t', '-', 'folder', ''],
  ['||t', '+', 'folder', ''], ['||t', '+', 'folder', ''], ['||t', '+', 'folder', ''], ['||t', '+', 'dark', ''],
  ['||t', '+', 'folder', 'Kabuklar'],
  ['||t', '+', 'mesnet', 'Mesnetler'],
  ['||t', '', 'nokta', 'Noktasal Kütleler'],
  ['||t', '', 'yay', 'Yaylar'],
  ['||t', '+', 'rijit', 'Rijit Bağlantılar'],
  ['||t', '', 'sonum', 'Sönüm Elemanları'],
  ['||L', '+', 'diyafram', 'Diyaframlar'],
  ['|t', '-', 'analiz', 'Analiz'],
  ['||t', '+', 'statik', 'Statik Analiz'],
  ['||t', '-', 'modalfolder', 'Modal Analiz'],
  ['|||L', '-', 'modal', 'Modal Analiz'],
  ['||| t', '', 'modal', 'Modal'],
  ['||| L', '', 'modal', "Modal'"],
  ['||t', '-', 'spfolder', 'Tasarım Spektrumu Analizi'],
  ['|||t', '-', 'spred', 'Tasarım Spektrumu'],
  ['||||L', '', 'sprednp', 'RSF1'],
  ['|||L', '-', 'spblue', 'Tasarım Spektrumu Durumları'],
  ['||| t', '', 'spblue', 'Ex'],
  ['||| t', '', 'spblue', 'Ey'],
  ['||| t', '', 'spblue', "Ex'"],
  ['||| L', '', 'spblue', "Ey'"],
  ['||t', '-', 'timefolder', 'Zaman Tanım Alanı Analizi'],
  ['|||t', '', 'ft', 'Zaman Tanım Alanı Fonksiyonu'],
  ['|||L', '', 'time', 'Zaman Tanım Alanı Durumları'],
  ['||t', '', 'nonlin', 'Nonlineer İtme Analizi'],
  ['||t', '', 'euler', 'Euler Burkulma Analizi'],
];
const drawings = ['ZEMİN KAT Kalıp Planı', '1. KAT Kalıp Planı', 'ZEMİN KAT Kolon Aplikasyon Planı', 'ZEMİN KAT Temel Apl. Planı'];
const tabNames = ['Kat Planları', 'Aplikasyon Planları', 'Kiriş Açılımları'];

const ToolButton = ({ id, h }: { id: string; h?: number }) => {
  const name = id.replace('*', '');
  return <Tool $on={id.endsWith('*')} $h={h} aria-label={name}><Icon name={name} /></Tool>;
};
const Small = ({ items, w, carets = [] }: { items: string[]; w?: number; carets?: number[] }) => (
  <SmallCol $w={w}>{items.map((n, i) => <SmallRow key={n}><ToolButton id={n} />{carets.includes(i) && <Caret />}</SmallRow>)}</SmallCol>
);

const DrawingIcon = () => (
  <svg width="14" height="14" viewBox="0 0 14 14" shapeRendering="crispEdges" aria-hidden="true">
    {f('M0 0h14v14H0z', '#e9e9e9')}
    {s('M.5.5h13v13H.5z', '#222', 1)}
    {f('M2 1h2v12H2zM9 1h2v12H9z')}
    {f('M4 6h5v2H4zM5 5h3v1H5z')}
    {f('M12 5h1v1h-1zM12 11h1v2h-2v-1h1z', '#f00')}
  </svg>
);

const Plan = () => (
  <svg width="1600" height="1200" viewBox="0 0 1600 1200" shapeRendering="crispEdges" aria-hidden="true">
    {f('M352 0h1248v1200H352z', '#0d1a22')}
    {s('M0 49.500h30M0 191.500h30M0 332.500h30M0 473.500h30M0 614.500h352M52.500 0v1200', '#464646')}
    {s('M0 166.500h30M0 445.500h30', '#777')}
    {s('M193.500 0v1200', '#bbb')}
    {s('M241.500 0v1200M266.500 0v1200', '#e01018')}
    {s('M334.500 0v1200M352.500 0v1200', '#ffff00')}
    {f('M335 0h21v4h-21z', '#fff')}
    {s('M338 4l3-4M343 4l3-4M348 4l3-4M353 4l3-4', '#000')}
    {s('M426.500 0v1200', '#168016')}
    {f('M474 0h3v1200h-3z', '#33339c')}
    {s('M494 166.500h1106', '#777')}
    {f('M494 223h1106v3H494z', '#128012')}
    {s('M494 302.500h1106', '#2c2c8c')}
    {f('M494 436h1106v19H494z')}
    {s('M494 436.500h1106M494 454.500h1106', '#ffff00')}
    {s('M494 445.500h1106', '#777')}
    <text x="495" y="12" fontSize="10" fontWeight="bold" fontFamily="Liberation Sans, sans-serif" fill="#5be36f">2</text>
    <text x="495" y="476" fontSize="10" fontWeight="bold" fontFamily="Liberation Sans, sans-serif" fill="#5be36f">2</text>
    <text x="264" y="596" fontSize="12" transform="rotate(-90 264 596)" fontFamily="Liberation Sans, sans-serif" fill="#fff">3</text>
    {f('M18 85h8v94h-8z', '#f2f4fb')}
    {f('M22 89h4v24h-4z', '#8796ab')}
    {s('M18 178.500h8', '#8a90a0')}
  </svg>
);

export default function App() {
  const [tab, setTab] = useState(1);
  return (
    <Page>
      <Global />
      <Logo aria-label="ideCAD">ide<b>CAD</b></Logo>
      <TitleBar>
        <Quick>
          {quick.map((q, i) => (q ? <ToolButton key={i} id={q} /> : <QuickSep key={i} />))}
          <Caret $wide />
        </Quick>
        <Customize aria-label="Özelleştir"><Caret /></Customize>
      </TitleBar>
      <Tabs>{menus.map((m, i) => <button key={i}>{m}</button>)}</Tabs>
      <Ribbon>
        <Group $w={149}>
          <GroupBody>
            <BigButton $w={51}><Big name="pencere" /><BigLabel lines={['Pencere', 'Değiştir']} /></BigButton>
            <VLine />
            <BigButton $w={42}><Big name="kat" /><BigLabel lines={['Kat', 'listesi']} caret="inline" /></BigButton>
            <BigButton $w={46}><Big name="cizim" /><BigLabel lines={['Çizim', 'Listesi']} caret="inline" /></BigButton>
          </GroupBody>
          <GroupTitle>Pencere</GroupTitle>
        </Group>
        <Group $w={178}>
          <GroupBody>
            <BigButton $w={64}><Big name="concrete" /><BigLabel lines={['Betonarme']} caret="below" /></BigButton>
            <BigButton $w={38}><Big name="steelbeam" /><BigLabel lines={['Çelik']} caret="below" /></BigButton>
            <BigButton $w={74}><Big name="scaffold" /><BigLabel lines={['Kalıp İskelesi', 'Çizimleri']} /></BigButton>
          </GroupBody>
          <GroupTitle>Çizim Oluştur</GroupTitle>
        </Group>
        <Group $w={207}>
          <GroupBody>
            <BigButton $w={44}><Big name="polyline" /><BigLabel lines={['Sürekli', 'Çizgi']} caret="inline" /></BigButton>
            <Small items={['plus2', 'circle3', 'arc']} />
            <Small items={['cloud', 'triangle', 'ellipse']} w={35} carets={[2]} />
            <Small items={['wave', 'spring', 'picture']} w={35} carets={[0]} />
            <BigButton $w={60}><Big name="library" /><BigLabel lines={['Kütüphane']} caret="below" /></BigButton>
          </GroupBody>
          <GroupTitle>İlkel Objeler</GroupTitle>
        </Group>
        <Group $w={314}>
          <GroupBody>
            <Small items={['compassA', 'angle', 'movegray']} />
            <VLine />
            <Small items={['rulerpen', 'dropper', 'label']} />
            <VLine />
            <BigButton $w={50}><Big name="bigmove" /><BigLabel lines={['Taşı']} /></BigButton>
            <Small items={['rotate', 'mirror', 'turn']} />
            <VLine />
            <Small items={['stairs', 'ibeam', 'array']} w={34} carets={[0]} />
            <Small items={['extend', 'chamfer', 'nodes']} />
            <Small items={['trim', 'fillet', 'wand']} />
            <VLine />
            <BigButton $w={36}><Big name="target" /><BigLabel lines={['Ofset']} /></BigButton>
          </GroupBody>
          <GroupTitle>Değiştir</GroupTitle>
        </Group>
      </Ribbon>
      <ToolStrip>
        <Grip />
        {strip.map((q, i) => (q ? <ToolButton key={i} id={q} /> : <Sep key={i} />))}
      </ToolStrip>
      <Work>
        <SideDock>
          <SideBar>
            <Grip $flat />
            {side.map((q, i) => (q ? <ToolButton key={i} id={q} h={21} /> : <HSep key={i} />))}
          </SideBar>
          <SideEnd><svg width="7" height="7" viewBox="0 0 7 7" aria-hidden="true">{s('M.5 0v7', '#fff')}{f('M2 0l5 3.500L2 7z', '#fff')}</svg></SideEnd>
        </SideDock>
        <TreePanel>
          <TreeHead>
            <h2>Yapı Ağacı</h2>
            <HeadButton aria-label="Sabitle"><svg width="8" height="10" viewBox="0 0 8 10">{s('M2.500 6V1.500h3V6M4.500 1v5M0 6.500h8M4 7v3', '#6a707b')}</svg></HeadButton>
            <HeadButton aria-label="Kapat"><svg width="9" height="9" viewBox="0 0 9 9">{s('M1 1l7 7M8 1L1 8', '#6a707b', 1.200)}</svg></HeadButton>
          </TreeHead>
          <TreeBody>
            <Tree>
              {rows.map(([g, t, icon, label], i) => (
                <TreeRow key={i}>
                  {[...g].map((k, j) => (
                    <Guide key={j} $k={k}>{j === g.length - 1 && t && <Toggle $plus={t === '+'} aria-label={`${label} ${t}`} />}</Guide>
                  ))}
                  <Icon name={icon} />
                  <TreeLabel>{label}</TreeLabel>
                </TreeRow>
              ))}
            </Tree>
            <VScroll><button aria-label="Yukarı"><svg width="9" height="6" viewBox="0 0 9 6">{s('M1 5l3.500-3.500L8 5', '#444', 1.800)}</svg></button></VScroll>
            <PanelEdge />
          </TreeBody>
        </TreePanel>
        <Splitter />
        <Canvas>
          <Plan />
          <Dialog role="dialog" aria-labelledby="dlg-title">
            <DialogTitle>
              <h1 id="dlg-title">Çizimler</h1>
              <button aria-label="Kapat"><svg width="12" height="12" viewBox="0 0 12 12">{s('M1 1l10 10M11 1L1 11', '#111', 1.200)}</svg></button>
            </DialogTitle>
            <DialogTabs role="tablist">
              {tabNames.map((n, i) => <DialogTab key={n} role="tab" aria-selected={tab === i} $on={tab === i} onClick={() => setTab(i)}>{n}</DialogTab>)}
            </DialogTabs>
            <TabPanel role="tabpanel">
              <ListBox>
                <ListArea>
                  <DrawingTable>
                    <thead><tr><th>Çizim</th></tr></thead>
                    <tbody>{drawings.map(d => <tr key={d}><td><button><DrawingIcon />{d}</button></td></tr>)}</tbody>
                  </DrawingTable>
                </ListArea>
                <HScroll>
                  <button aria-label="Sola"><svg width="6" height="8" viewBox="0 0 6 8">{s('M5 1L1.500 4 5 7', '#444', 1.800)}</svg></button>
                  <HThumb />
                  <button aria-label="Sağa"><svg width="6" height="8" viewBox="0 0 6 8">{s('M1 1l3.500 3L1 7', '#444', 1.800)}</svg></button>
                </HScroll>
              </ListBox>
            </TabPanel>
            <DialogFoot>
              <PushButton $main>Tamam</PushButton>
              <PushButton>İptal</PushButton>
            </DialogFoot>
          </Dialog>
        </Canvas>
        <Marker />
        <Tooltip role="tooltip">
          <Icon name="listdoc" />
          <strong>Çizimler</strong>
          <p>{'Kat planları, aplikasyon vb. tüm\npencerelerin listesini ekrana getirir.'}</p>
          <p>{'Tıklandığında açılan listede, kat veya\nçizim pencerelerini silebilir, isimlerini\ndeğiştirebilir veya istediğiniz  bir\npencereye geçiş yapabilirsiniz.'}</p>
        </Tooltip>
      </Work>
    </Page>
  );
}
